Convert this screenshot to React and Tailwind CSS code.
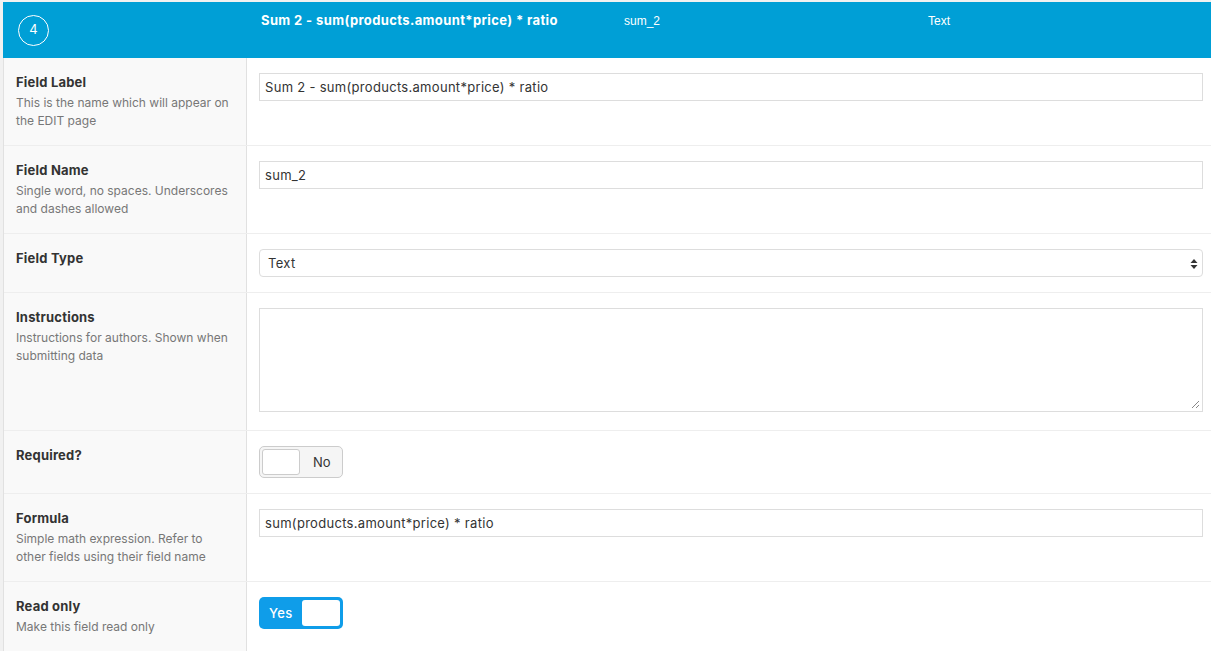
import React from "react";

const font = { fontFamily: "Inter, 'Noto Sans', 'Liberation Sans', sans-serif" };

function Label({ title, desc }) {
  return (
    <div className="w-[243px] shrink-0 bg-[#f9f9f9] border-r border-[#e1e1e1] pl-[12px] pr-3 pt-[15px] pb-3">
      <div className="text-[13px] leading-[18px] font-bold text-[#333] tracking-[0.2px]">{title}</div>
      {desc && (
        <div className="mt-[3px] text-[12px] leading-[18px] text-[#777]">{desc}</div>
      )}
    </div>
  );
}

function Row({ title, desc, h, children }) {
  return (
    <div className={`flex border-b border-[#eeeeee] ${h}`}>
      <Label title={title} desc={desc} />
      <div className="flex-1 pl-[12px] pr-[8px] pt-[15px]">{children}</div>
    </div>
  );
}

function TextInput({ value }) {
  return (
    <div className="h-[28px] border border-[#dddddd] bg-white flex items-center pl-[5px] pt-[1px] text-[13px] text-[#333] tracking-[0.3px]">
      {value}
    </div>
  );
}

function Toggle({ on }) {
  if (on) {
    return (
      <div className="w-[84px] h-[32px] rounded-[5px] bg-[#0f9de9] flex items-center justify-between pl-[10px] pr-[3px]">
        <span className="text-white text-[13px] font-medium tracking-[0.3px] pt-[1px]">Yes</span>
        <span className="w-[38px] h-[26px] rounded-[3px] bg-white" />
      </div>
    );
  }
  return (
    <div className="w-[84px] h-[32px] rounded-[5px] border border-[#cccccc] bg-[#f5f5f5] flex items-center pl-[2px]">
      <span className="w-[38px] h-[26px] rounded-[3px] bg-white border border-[#cccccc]" />
      <span className="ml-[13px] text-[13px] text-[#333] pt-[1px]">No</span>
    </div>
  );
}

export default function App() {
  return (
    <div className="w-[1211px] h-[651px] overflow-hidden bg-[#f1f1f1] pt-[2px] pl-[3px]" style={font}>
      <div className="bg-white border-l border-[#e1e1e1] h-full">
        {/* field header bar */}
        <div className="h-[56px] -ml-px bg-[#009fd6] flex text-white">
          <div className="w-[244px] shrink-0 flex items-center pl-[15px]">
            <div className="w-[31px] h-[31px] rounded-full border-[1.5px] border-white flex items-center justify-center text-[13px]">
              4
            </div>
          </div>
          <div className="w-[366px] shrink-0 pl-[14px] pt-[9px] text-[13px] font-bold tracking-[0.38px]">
            Sum 2 - sum(products.amount*price) * ratio
          </div>
          <div className="w-[315px] shrink-0 pl-[11px] pt-[10px] text-[12px]" style={{ fontFamily: "'Liberation Sans', Arial, sans-serif" }}>
            sum_2
          </div>
          <div className="pt-[10px] text-[12px]" style={{ fontFamily: "'Liberation Sans', Arial, sans-serif" }}>
            Text
          </div>
        </div>

        <Row title="Field Label" desc="This is the name which will appear on the EDIT page" h="h-[88px]">
          <TextInput value="Sum 2 - sum(products.amount*price) * ratio" />
        </Row>

        <Row title="Field Name" desc="Single word, no spaces. Underscores and dashes allowed" h="h-[88px]">
          <TextInput value="sum_2" />
        </Row>

        <Row title="Field Type" h="h-[59px]">
          <div className="h-[28px] border border-[#dddddd] rounded-[4px] bg-white flex items-center justify-between pl-[8px] pr-[4px] pt-[1px] text-[13px] text-[#333] tracking-[0.3px]">
            <span>Text</span>
            <svg width="8" height="12" viewBox="0 0 8 12">
              <path d="M4 1 L7.5 5 H0.5 Z" fill="#333" />
              <path d="M4 11 L7.5 7 H0.5 Z" fill="#333" />
            </svg>
          </div>
        </Row>

        <Row title="Instructions" desc="Instructions for authors. Shown when submitting data" h="h-[138px]">
          <div className="relative h-[104px] border border-[#dddddd] bg-white">
            <svg className="absolute right-[2px] bottom-[2px]" width="9" height="9" viewBox="0 0 9 9">
              <path d="M8 1 L1 8 M8 5 L5 8" stroke="#888" strokeWidth="1" />
            </svg>
          </div>
        </Row>

        <Row title="Required?" h="h-[63px]">
          <Toggle on={false} />
        </Row>

        <Row title="Formula" desc="Simple math expression. Refer to other fields using their field name" h="h-[88px]">
          <TextInput value="sum(products.amount*price) * ratio" />
        </Row>

        <Row title="Read only" desc="Make this field read only" h="h-[80px]">
          <Toggle on={true} />
        </Row>
      </div>
    </div>
  );
}
